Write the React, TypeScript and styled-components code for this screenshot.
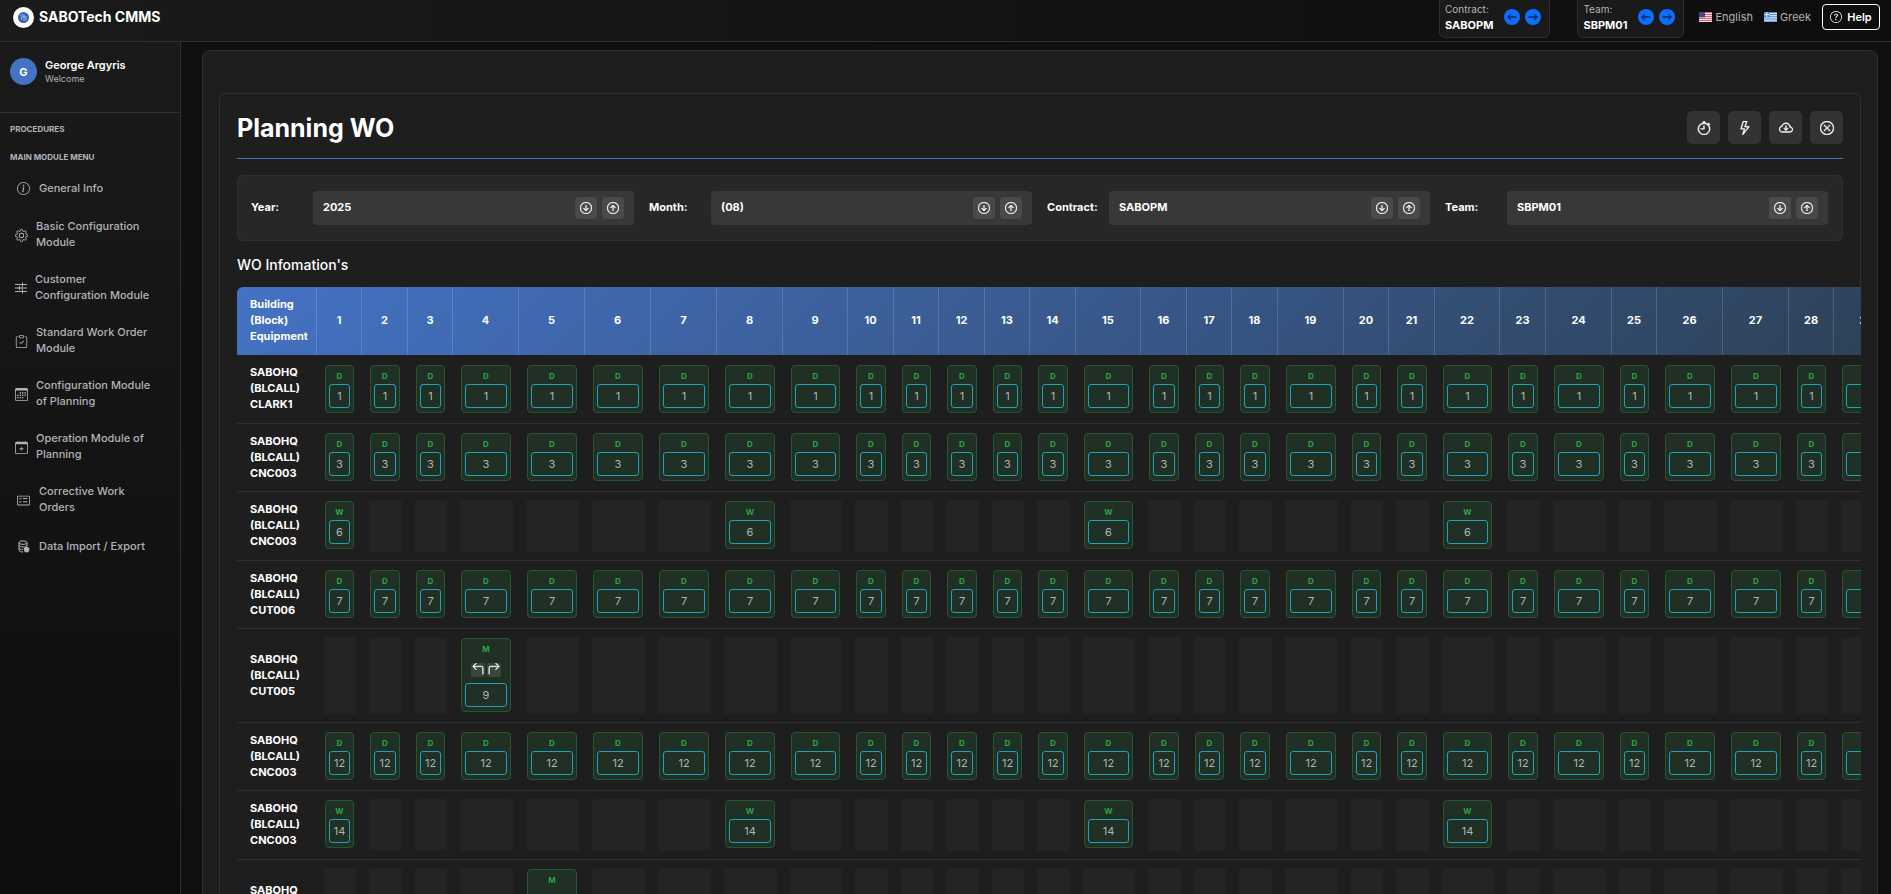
import React from "react";
import styled, { createGlobalStyle } from "styled-components";
import {
  BsInfoCircle, BsGear, BsClipboardCheck, BsCalendar3, BsCalendarPlus, BsCardChecklist,
  BsStopwatch, BsLightning, BsCloudArrowDown, BsXCircle, BsArrowDownCircle,
  BsArrowUpCircle, BsArrowLeft, BsArrowRight, BsQuestionCircle, BsArrow90DegLeft, BsArrow90DegRight,
} from "react-icons/bs";

const c = {
  page: "#101010",
  card: "#1e1e1e",
  line: "#2f2f2f",
  text: "#ffffff",
  muted: "#b0b3b8",
  accent: "#4472c4",
  green: "#28a745",
  teal: "#1fa2b8",
};

const GlobalStyle = createGlobalStyle`
  * { box-sizing: border-box; }
  body { margin: 0; background: ${c.page}; color: ${c.text}; font: 400 12px/16px Inter, "Open Sans", sans-serif; }
  button, input { font: inherit; color: inherit; margin: 0; padding: 0; border: 0; background: none; }
  button { cursor: pointer; }
  a { color: inherit; text-decoration: none; }
  svg { display: block; flex: none; }
`;

const Shell = styled.div`
  height: 100vh;
  display: flex;
  flex-direction: column;
  overflow: hidden;
`;

const TopBar = styled.header`
  flex: none;
  height: 42px;
  padding: 0 11px 7px 13px;
  display: flex;
  align-items: center;
  border-bottom: 1px solid ${c.line};
  background: linear-gradient(90deg, #1a1a1a, #0d0d0d);
`;

const Brand = styled.a`
  display: flex;
  align-items: center;
  gap: 5px;
  margin-right: auto;
  font-size: 14px;
  font-weight: 700;
  white-space: nowrap;
`;

const Switcher = styled.div<{ $gap: number }>`
  flex: none;
  height: 42px;
  display: flex;
  align-items: center;
  gap: 11px;
  padding: 0 8px 0 5px;
  margin-right: ${(p) => p.$gap}px;
  border: 1px solid ${c.line};
  border-radius: 6px;
  background: #1a1a1a;
`;

const SwitcherText = styled.div`
  font-size: 10px;
  color: ${c.muted};
`;

const SwitcherValue = styled.strong`
  display: block;
  font-size: 11px;
  font-weight: 700;
  color: ${c.text};
`;

const RoundPair = styled.div`
  display: flex;
  gap: 5px;
`;

const RoundButton = styled.button`
  width: 16px;
  height: 16px;
  display: grid;
  place-items: center;
  border-radius: 50%;
  background: #0d6efd;
  color: #0b234c;

  svg {
    stroke: currentColor;
    stroke-width: 1px;
  }
`;

const Language = styled.a`
  display: flex;
  align-items: center;
  gap: 3px;
  margin-right: 11px;
  font-size: 11px;
  color: ${c.muted};
`;

const HelpButton = styled.button`
  height: 26px;
  width: 58px;
  display: flex;
  align-items: center;
  justify-content: center;
  gap: 5px;
  border: 1px solid #ffffff;
  border-radius: 4px;
  font-size: 11px;
  font-weight: 600;
`;

const Body = styled.div`
  flex: 1;
  min-height: 0;
  display: flex;
`;

const Sidebar = styled.nav`
  flex: none;
  width: 181px;
  border-right: 1px solid ${c.line};
  background: linear-gradient(180deg, #1a1a1a, #0d0d0d);
`;

const Profile = styled.div`
  height: 71px;
  display: flex;
  align-items: flex-start;
  gap: 8px;
  padding: 16px 10px 0;
  border-bottom: 1px solid ${c.line};
`;

const Avatar = styled.div`
  width: 27px;
  height: 27px;
  display: grid;
  place-items: center;
  border-radius: 50%;
  background: ${c.accent};
  font-size: 11px;
  font-weight: 700;
`;

const ProfileText = styled.div`
  font-size: 9px;
  line-height: 13px;
  color: ${c.muted};
`;

const ProfileName = styled.strong`
  display: block;
  font-size: 11px;
  line-height: 14px;
  font-weight: 600;
  color: ${c.text};
`;

const MenuTitle = styled.h2`
  margin: 0;
  padding: 8px 10px 4px;
  font-size: 8px;
  font-weight: 700;
  color: ${c.muted};
`;

const MenuLink = styled.a<{ $tight?: boolean }>`
  min-height: 40px;
  display: flex;
  align-items: center;
  gap: ${(p) => (p.$tight ? 8 : 9)}px;
  padding: 9px 8px 10px ${(p) => (p.$tight ? 15 : 17)}px;
  font-size: 11px;
  font-weight: 500;
  color: ${c.muted};
`;

const MenuLines = styled.span`
  display: block;
  padding-bottom: 2px;
  white-space: pre-line;
`;

const Main = styled.main`
  flex: 1;
  min-width: 0;
  overflow: hidden;
  padding: 8px 13px 0 21px;
`;

const OuterCard = styled.section`
  padding: 42px 16px 16px;
  border: 1px solid ${c.line};
  border-radius: 8px;
  background: ${c.card};
`;

const InnerCard = styled.section`
  padding: 17px;
  border: 1px solid ${c.line};
  border-radius: 6px;
`;

const TitleRow = styled.div`
  display: flex;
  align-items: center;
  justify-content: space-between;
  padding-bottom: 14px;
  border-bottom: 1px solid ${c.accent};
`;

const Title = styled.h1`
  margin: 0;
  font-size: 25px;
  line-height: 32px;
  font-weight: 700;
`;

const Actions = styled.div`
  display: flex;
  gap: 8px;
`;

const ActionButton = styled.button`
  width: 33px;
  height: 33px;
  display: grid;
  place-items: center;
  border-radius: 5px;
  background: #333333;

  svg {
    stroke: currentColor;
    stroke-width: 0.5px;
  }
`;

const Filters = styled.form`
  display: grid;
  grid-template-columns: repeat(4, 1fr);
  gap: 15px;
  margin-top: 16px;
  padding: 15px 14px 15px 13px;
  border: 1px solid ${c.line};
  border-radius: 6px;
  background: #272727;
`;

const Filter = styled.div`
  display: flex;
  align-items: center;
`;

const FilterLabel = styled.label`
  flex: none;
  width: 62px;
  padding-bottom: 2px;
  font-size: 11px;
  font-weight: 700;
`;

const FilterBox = styled.div`
  flex: 1;
  min-width: 0;
  height: 34px;
  display: flex;
  align-items: center;
  gap: 5px;
  padding: 0 10px;
  border-radius: 4px;
  background: #383838;
`;

const FilterInput = styled.input`
  flex: 1;
  min-width: 0;
  padding-bottom: 2px;
  font-size: 11px;
  font-weight: 700;
  outline: none;
`;

const StepButton = styled.button`
  width: 22px;
  height: 22px;
  display: grid;
  place-items: center;
  border-radius: 4px;
  background: #4a4a4a;

  svg {
    stroke: currentColor;
    stroke-width: 0.5px;
  }
`;

const Subtitle = styled.h2`
  margin: 14px 0 12px;
  font-size: 14px;
  line-height: 20px;
  font-weight: 500;
`;

const TableScroller = styled.div`
  margin-right: -18px;
  overflow-x: auto;
  overflow-y: hidden;
  scrollbar-width: none;
  background: ${c.card};
`;

const Table = styled.table`
  table-layout: fixed;
  width: 1750px;
  border-spacing: 0;
  border-radius: 6px 0 0 0;
  overflow: hidden;
`;

const Col = styled.col<{ $w: number }>`
  width: ${(p) => p.$w}px;
`;

const HeadRow = styled.tr`
  background: linear-gradient(135deg, #4472c4, #2c3e50);
`;

const HeadCell = styled.th`
  height: 68px;
  padding: 0 0 2px;
  border-right: 1px solid #ffffff26;
  font-size: 11px;
  font-weight: 700;

  &:first-child {
    padding-left: 13px;
    text-align: left;
  }
`;

const RowLabel = styled.th`
  padding: 0 0 2px 13px;
  border-bottom: 1px solid ${c.line};
  font-size: 11px;
  font-weight: 700;
  text-align: left;
  white-space: pre-line;
`;

const rowHeights = { D: 68, W: 69, M: 94 };
type Kind = keyof typeof rowHeights;

const DayCell = styled.td<{ $filled: boolean }>`
  padding: ${(p) => (p.$filled ? "9px 8px 0" : "8px 6px 0 7px")};
  border-bottom: 1px solid ${c.line};
  vertical-align: top;
`;

const PlanRow = styled.tr<{ $kind: Kind }>`
  height: ${(p) => rowHeights[p.$kind]}px;

  &:first-child {
    height: 69px;
  }

  &:first-child ${DayCell} {
    padding-top: 10px;
  }
`;

const Blank = styled.div<{ $kind: Kind }>`
  height: ${(p) => rowHeights[p.$kind] - 17}px;
  border-radius: 2px;
  background: #242424;
`;

const Order = styled.div<{ $kind: Kind }>`
  height: ${(p) => (p.$kind === "M" ? 74 : 48)}px;
  display: flex;
  flex-direction: column;
  align-items: center;
  justify-content: space-between;
  padding: 2px 3px 4px;
  border: 1px solid #28552f;
  border-radius: 4px;
  background: #203024;
`;

const OrderKind = styled.span`
  font-size: 8px;
  font-weight: 700;
  color: ${c.green};
`;

const MovePair = styled.div`
  display: flex;
  gap: 2px;
`;

const MoveButton = styled.button`
  width: 14px;
  height: 14px;
  display: grid;
  place-items: start center;
  border-radius: 2px;
  background: #3a473d;

  svg {
    stroke: currentColor;
    stroke-width: 0.5px;
  }
`;

const OrderButton = styled.button`
  width: 100%;
  height: 24px;
  padding-bottom: 1px;
  border: 1px solid ${c.teal};
  border-radius: 3px;
  font-size: 11px;
  color: ${c.muted};
`;

const Logo = () => (
  <svg width="21" height="21" viewBox="0 0 21 21" aria-hidden="true">
    <circle cx="10.5" cy="10.5" r="10.5" fill="#fff" />
    <circle cx="10.5" cy="10.5" r="5.5" fill="#3564b0" />
    <path d="M7 7.5l1.3 1.8M9 7l1 1.8M8.5 9.7v3M11 7.5v6.5M13 9.5v4M9 9.8h3.6" stroke="#b9cdec" strokeWidth=".8" fill="none" />
  </svg>
);

const TuneIcon = () => (
  <svg width="12" height="12" viewBox="0 0 12 12" fill="none" stroke="currentColor" strokeWidth="1" aria-hidden="true">
    <path d="M0 2.5h12M7.5 .5v4M0 6h12M4.5 4v4M7 5v2M0 9.5h12M7.5 7.5v4" />
  </svg>
);

const DataIcon = () => (
  <svg width="13" height="13" viewBox="0 0 13 13" fill="none" stroke="currentColor" strokeWidth="1" aria-hidden="true">
    <ellipse cx="6" cy="2.6" rx="4" ry="1.8" />
    <path d="M2 2.6v7.6c0 1 1.8 1.8 4 1.8M10 2.6v3.6M2 5.2C2 6.2 3.800 7 6 7s4-.8 4-1.800M2 7.800c0 1 1.800 1.700 3.800 1.700" />
    <circle cx="9.600" cy="9.600" r="2.800" fill="currentColor" stroke="none" />
  </svg>
);

const UsFlag = () => (
  <svg width="13" height="10" viewBox="0 0 13 10" aria-hidden="true">
    <path fill="#f3dfe1" d="M0 0h13v10H0z" />
    <path stroke="#d9606e" d="M0 .5h13M0 2.5h13M0 4.5h13M0 6.5h13M0 8.5h13" />
    <path fill="#46467f" d="M0 0h6v5.4H0z" />
  </svg>
);

const GreekFlag = () => (
  <svg width="13" height="10" viewBox="0 0 13 10" aria-hidden="true">
    <path fill="#e4eefa" d="M0 0h13v10H0z" />
    <path stroke="#3f86d0" d="M0 .5h13M0 2.6h13M0 4.8h13M0 7h13M0 9.2h13" />
    <path fill="#3f86d0" d="M0 0h5.6v5.3H0z" />
    <path stroke="#fff" d="M0 2.6h5.6M2.8 0v5.3" />
  </svg>
);

const menu = [
  { icon: <BsInfoCircle size={13} />, text: "General Info" },
  { icon: <BsGear size={13} />, text: "Basic Configuration\nModule", tight: true },
  { icon: <TuneIcon />, text: "Customer\nConfiguration Module", tight: true },
  { icon: <BsClipboardCheck size={13} />, text: "Standard Work Order\nModule", tight: true },
  { icon: <BsCalendar3 size={13} />, text: "Configuration Module\nof Planning", tight: true },
  { icon: <BsCalendarPlus size={13} />, text: "Operation Module of\nPlanning", tight: true },
  { icon: <BsCardChecklist size={13} />, text: "Corrective Work\nOrders" },
  { icon: <DataIcon />, text: "Data Import / Export" },
];

const filters = [
  { id: "year", label: "Year:", value: "2025" },
  { id: "month", label: "Month:", value: "(08)" },
  { id: "contract", label: "Contract:", value: "SABOPM" },
  { id: "team", label: "Team:", value: "SBPM01" },
];

const dayWidths = [
  45, 46, 45, 66, 66, 66, 66, 66, 65, 46, 45, 46, 45, 46, 65, 46,
  45, 46, 66, 45, 46, 65, 46, 66, 45, 66, 66, 45, 66, 46, 45,
];

const weekly = [1, 8, 15, 22];

const rows: { unit: string; kind: Kind; order: number; days?: number[] }[] = [
  { unit: "CLARK1", kind: "D", order: 1 },
  { unit: "CNC003", kind: "D", order: 3 },
  { unit: "CNC003", kind: "W", order: 6, days: weekly },
  { unit: "CUT006", kind: "D", order: 7 },
  { unit: "CUT005", kind: "M", order: 9, days: [4] },
  { unit: "CNC003", kind: "D", order: 12 },
  { unit: "CNC003", kind: "W", order: 14, days: weekly },
  { unit: "CUT006", kind: "M", order: 15, days: [5] },
];

const OrderCard = ({ kind, order }: { kind: Kind; order: number }) => (
  <Order $kind={kind}>
    <OrderKind>{kind}</OrderKind>
    {kind === "M" && (
      <MovePair>
        <MoveButton type="button" aria-label="Move earlier"><BsArrow90DegLeft size={12} /></MoveButton>
        <MoveButton type="button" aria-label="Move later"><BsArrow90DegRight size={12} /></MoveButton>
      </MovePair>
    )}
    <OrderButton type="button">{order}</OrderButton>
  </Order>
);

const ScopeSwitcher = ({ label, value, gap }: { label: string; value: string; gap: number }) => (
  <Switcher $gap={gap}>
    <SwitcherText>
      {label}
      <SwitcherValue>{value}</SwitcherValue>
    </SwitcherText>
    <RoundPair>
      <RoundButton type="button" aria-label={`Previous ${label}`}><BsArrowLeft size={10} /></RoundButton>
      <RoundButton type="button" aria-label={`Next ${label}`}><BsArrowRight size={10} /></RoundButton>
    </RoundPair>
  </Switcher>
);

export default function App() {
  return (
    <Shell>
      <GlobalStyle />
      <TopBar>
        <Brand href="#"><Logo />SABOTech CMMS</Brand>
        <ScopeSwitcher label="Contract:" value="SABOPM" gap={27} />
        <ScopeSwitcher label="Team:" value="SBPM01" gap={15} />
        <Language href="#"><UsFlag />English</Language>
        <Language href="#"><GreekFlag />Greek</Language>
        <HelpButton type="button"><BsQuestionCircle size={12} />Help</HelpButton>
      </TopBar>
      <Body>
        <Sidebar>
          <Profile>
            <Avatar>G</Avatar>
            <ProfileText>
              <ProfileName>George Argyris</ProfileName>
              Welcome
            </ProfileText>
          </Profile>
          <MenuTitle>PROCEDURES</MenuTitle>
          <MenuTitle>MAIN MODULE MENU</MenuTitle>
          {menu.map((m) => (
            <MenuLink key={m.text} href="#" $tight={m.tight}>
              {m.icon}
              <MenuLines>{m.text}</MenuLines>
            </MenuLink>
          ))}
        </Sidebar>
        <Main>
          <OuterCard>
            <InnerCard>
              <TitleRow>
                <Title>Planning WO</Title>
                <Actions>
                  <ActionButton type="button" aria-label="Schedule"><BsStopwatch size={14} /></ActionButton>
                  <ActionButton type="button" aria-label="Run"><BsLightning size={14} /></ActionButton>
                  <ActionButton type="button" aria-label="Download"><BsCloudArrowDown size={14} /></ActionButton>
                  <ActionButton type="button" aria-label="Close"><BsXCircle size={14} /></ActionButton>
                </Actions>
              </TitleRow>
              <Filters>
                {filters.map((f) => (
                  <Filter key={f.id}>
                    <FilterLabel htmlFor={f.id}>{f.label}</FilterLabel>
                    <FilterBox>
                      <FilterInput id={f.id} defaultValue={f.value} />
                      <StepButton type="button" aria-label="Down"><BsArrowDownCircle size={12} /></StepButton>
                      <StepButton type="button" aria-label="Up"><BsArrowUpCircle size={12} /></StepButton>
                    </FilterBox>
                  </Filter>
                ))}
              </Filters>
              <Subtitle>WO Infomation's</Subtitle>
              <TableScroller>
                <Table>
                  <colgroup>
                    <Col $w={80} />
                    {dayWidths.map((w, i) => <Col key={i} $w={w} />)}
                  </colgroup>
                  <thead>
                    <HeadRow>
                      <HeadCell scope="col">Building (Block) Equipment</HeadCell>
                      {dayWidths.map((_, i) => <HeadCell key={i} scope="col">{i + 1}</HeadCell>)}
                    </HeadRow>
                  </thead>
                  <tbody>
                    {rows.map((r) => (
                      <PlanRow key={r.order} $kind={r.kind}>
                        <RowLabel scope="row">{`SABOHQ\n(BLCALL)\n${r.unit}`}</RowLabel>
                        {dayWidths.map((_, i) => {
                          const filled = !r.days || r.days.includes(i + 1);
                          return (
                            <DayCell key={i} $filled={filled}>
                              {filled ? <OrderCard kind={r.kind} order={r.order} /> : <Blank $kind={r.kind} />}
                            </DayCell>
                          );
                        })}
                      </PlanRow>
                    ))}
                  </tbody>
                </Table>
              </TableScroller>
            </InnerCard>
          </OuterCard>
        </Main>
      </Body>
    </Shell>
  );
}
